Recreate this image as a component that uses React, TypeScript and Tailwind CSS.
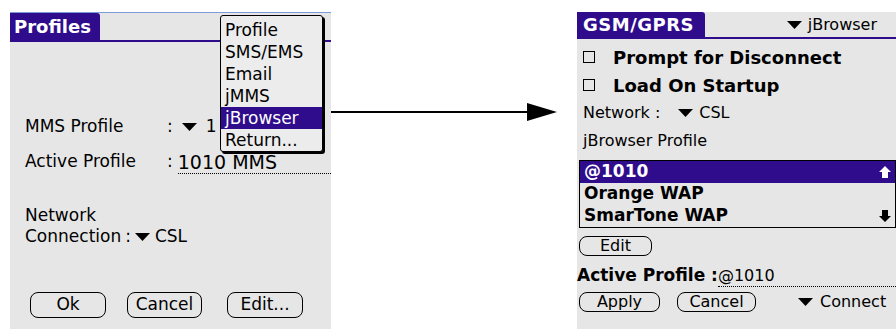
const BLUE = "bg-[#2f0c8c]";

function Tri({ className = "" }: { className?: string }) {
  return (
    <svg width="15" height="8" viewBox="0 0 15 8" className={`shrink-0 ${className}`}>
      <polygon points="0,0 15,0 7.5,8" fill="#000" />
    </svg>
  );
}

function ScrollArrow({ dir, color }: { dir: "up" | "down"; color: string }) {
  const pts =
    dir === "up"
      ? "6,0 12,6 9,6 9,12 3,12 3,6 0,6"
      : "3,0 9,0 9,6 12,6 6,12 0,6 3,6";
  return (
    <svg width="12" height="12" viewBox="0 0 12 12">
      <polygon points={pts} fill={color} />
    </svg>
  );
}

function PalmButton({
  label,
  w,
  h,
  className = "",
}: {
  label: string;
  w: string;
  h: string;
  className?: string;
}) {
  return (
    <div
      className={`${w} ${h} flex items-center justify-center border-[1.5px] border-black rounded-[8px] ${className}`}
    >
      {label}
    </div>
  );
}

function ProfilesScreen() {
  const menu = ["Profile", "SMS/EMS", "Email", "jMMS", "jBrowser", "Return..."];
  return (
    <div className="relative w-[321px] h-[317px] mt-[12px] ml-[10px] bg-[#e6e6e6] border-t border-[#7d9bd9] text-[17px] text-black font-['DejaVu_Sans',sans-serif]">
      {/* Title */}
      <div className="flex h-[29px] border-b-2 border-[#2f0c8c]">
        <div
          className={`${BLUE} w-[90px] h-full rounded-tr-[3px] pl-[4px] text-white font-bold text-[18px] leading-[28px]`}
        >
          Profiles
        </div>
      </div>

      <div className="pl-[15px]">
        <div className="mt-[74px] flex h-[22px] items-center whitespace-nowrap">
          <span className="w-[142px]">MMS Profile</span>
          <span>:</span>
          <Tri className="ml-[9px]" />
          <span className="ml-[9px]">1</span>
        </div>
        <div className="mt-[13px] flex h-[22px] items-center whitespace-nowrap">
          <span className="w-[142px]">Active Profile</span>
          <span>:</span>
          <span className="ml-[5px] flex-1 border-b border-dotted border-black text-[19px] leading-[22px]">
            1010 MMS
          </span>
        </div>
        <div className="mt-[31px] h-[22px] leading-[22px]">Network</div>
        <div className="flex h-[22px] items-center whitespace-nowrap">
          <span>Connection</span>
          <span className="ml-[4px]">:</span>
          <Tri className="ml-[4px]" />
          <span className="ml-[5px]">CSL</span>
        </div>
      </div>

      <div className="mt-[44px] ml-[20px] flex">
        <PalmButton label="Ok" w="w-[76px]" h="h-[26px]" />
        <PalmButton label="Cancel" w="w-[75px]" h="h-[26px]" className="ml-[21px]" />
        <PalmButton label="Edit..." w="w-[76px]" h="h-[26px]" className="ml-[25px]" />
      </div>

      {/* Popup menu */}
      <div className="absolute left-[210px] top-[2px] w-[103px] h-[137px] bg-[#ececec] border border-black rounded-[3px] shadow-[2px_2px_0_#000] pt-[3px]">
        {menu.map((m) => (
          <div
            key={m}
            className={`h-[22px] leading-[22px] pl-[4px] ${
              m === "jBrowser" ? `${BLUE} text-white` : ""
            }`}
          >
            {m}
          </div>
        ))}
      </div>
    </div>
  );
}

function Arrow() {
  return (
    <svg width="246" height="329" viewBox="0 0 246 329" className="shrink-0">
      <line x1="0" y1="112" x2="200" y2="112" stroke="#000" strokeWidth="2" />
      <polygon points="196,103 226,112 196,121" fill="#000" />
    </svg>
  );
}

function GprsScreen() {
  const items = ["@1010", "Orange WAP", "SmarTone WAP"];
  return (
    <div className="w-[319px] h-[317px] mt-[12px] bg-[#e6e6e6] text-[16px] text-black font-['DejaVu_Sans',sans-serif]">
      {/* Title */}
      <div className="flex h-[27px] border-b-2 border-[#2f0c8c]">
        <div
          className={`${BLUE} w-[128px] h-full rounded-tr-[3px] pl-[6px] text-white font-bold text-[18px] leading-[26px] tracking-[0.5px]`}
        >
          GSM/GPRS
        </div>
        <div className="ml-auto mr-[19px] flex items-center gap-[6px]">
          <Tri />
          <span>jBrowser</span>
        </div>
      </div>

      <div className="pl-[6px] mt-[4px]">
        <div className="flex h-[28px] items-center font-bold text-[18px]">
          <span className="shrink-0 w-[12px] h-[12px] border-[1.5px] border-black" />
          <span className="ml-[18px]">Prompt for Disconnect</span>
        </div>
        <div className="flex h-[28px] items-center font-bold text-[18px]">
          <span className="shrink-0 w-[12px] h-[12px] border-[1.5px] border-black" />
          <span className="ml-[18px]">Load On Startup</span>
        </div>
        <div className="flex h-[28px] items-center">
          <span>Network :</span>
          <Tri className="ml-[18px]" />
          <span className="ml-[6px]">CSL</span>
        </div>
        <div className="h-[28px] leading-[28px]">jBrowser Profile</div>
      </div>

      {/* Profile list */}
      <div className="mt-[5px] ml-[2px] h-[68px] border border-black font-bold text-[17px]">
        {items.map((it, i) => (
          <div
            key={it}
            className={`flex h-[22px] items-center justify-between pl-[4px] pr-[4px] ${
              i === 0 ? `${BLUE} text-white` : ""
            }`}
          >
            <span>{it}</span>
            {i === 0 && <ScrollArrow dir="up" color="#fff" />}
            {i === 2 && <ScrollArrow dir="down" color="#000" />}
          </div>
        ))}
      </div>

      <PalmButton label="Edit" w="w-[73px]" h="h-[20px]" className="mt-[8px] ml-[2px] rounded-[6px]" />

      <div className="mt-[9px] flex h-[22px] items-center whitespace-nowrap">
        <span className="font-bold text-[17px]">Active Profile :</span>
        <span className="flex-1 border-b border-dotted border-black leading-[20px]">@1010</span>
      </div>

      <div className="mt-[3px] ml-[2px] flex items-center">
        <PalmButton label="Apply" w="w-[81px]" h="h-[20px]" className="rounded-[6px]" />
        <PalmButton label="Cancel" w="w-[79px]" h="h-[20px]" className="ml-[17px] rounded-[6px]" />
        <Tri className="ml-[42px]" />
        <span className="ml-[7px]">Connect</span>
      </div>
    </div>
  );
}

export default function App() {
  return (
    <div className="flex w-[896px] h-[329px] bg-white overflow-hidden">
      <ProfilesScreen />
      <Arrow />
      <GprsScreen />
    </div>
  );
}
